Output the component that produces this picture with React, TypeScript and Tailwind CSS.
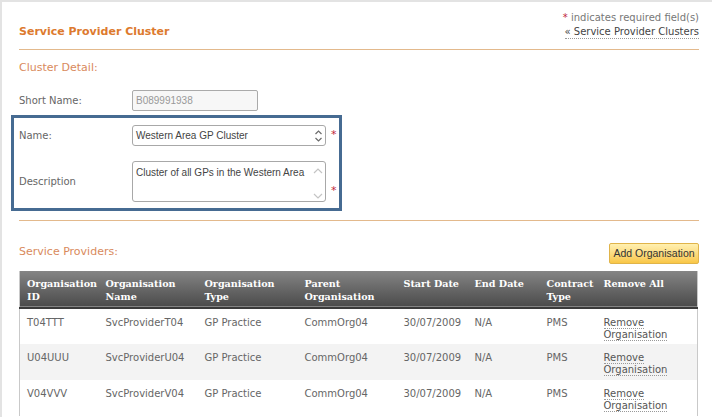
import React from "react";

const rows = [
  { id: "T04TTT", name: "SvcProviderT04" },
  { id: "U04UUU", name: "SvcProviderU04" },
  { id: "V04VVV", name: "SvcProviderV04" },
];

function Spin() {
  return (
    <svg width="9" height="14" viewBox="0 0 9 14" className="shrink-0">
      <path d="M1.5 5 L4.5 2 L7.5 5" fill="none" stroke="#6b6b6b" strokeWidth="1.2" />
      <path d="M1.5 9 L4.5 12 L7.5 9" fill="none" stroke="#6b6b6b" strokeWidth="1.2" />
    </svg>
  );
}

export default function App() {
  return (
    <div className="w-[712px] h-[417px] overflow-hidden bg-white border-t-2 border-l-2 border-[#e3e3e3] pl-[1px] font-['DejaVu_Sans',Verdana,sans-serif] text-[10px] text-[#666]">
      <div className="pl-[16px] pr-[13px]">
        {/* header */}
        <div className="flex justify-between items-start pt-[9px] border-b border-[#e3b98c] pb-[8px]">
          <div className="pt-[13px] text-[11px] font-bold text-[#dd7a2e]">Service Provider Cluster</div>
          <div className="text-right text-[10px] leading-[14px]">
            <div className="text-[#777]"><span className="text-[#c0263a]">*</span> indicates required field(s)</div>
            <div className="inline-block text-[#444] border-b border-dotted border-[#999] leading-[13px]">« Service Provider Clusters</div>
          </div>
        </div>

        <div className="pt-[10px] text-[11px] text-[#d98a5c]">Cluster Detail:</div>

        <div className="flex items-center mt-[14px] h-[21px]">
          <div className="w-[113px]">Short Name:</div>
          <div className="w-[126px] h-[21px] border border-[#aaa] rounded-[2px] bg-[#f7f7f7] px-[3px] flex items-center font-['Liberation_Sans',Arial,sans-serif] text-[10px] text-[#999]">B089991938</div>
        </div>
      </div>

      <div className="ml-[8px] w-[331px] mt-[4px] border-[3px] border-[#466b92] pl-[5px] pt-[7px] pb-[6px]">
        <div className="flex items-center h-[21px]">
          <div className="w-[113px]">Name:</div>
          <div className="w-[194px] h-[21px] border border-[#a8a8a8] rounded-[3px] bg-white pl-[3px] pr-[2px] flex items-center justify-between font-['Liberation_Sans',Arial,sans-serif] text-[10px] text-[#444]">
            <span>Western Area GP Cluster</span>
            <Spin />
          </div>
          <span className="ml-[5px] text-[#c0263a] text-[11px]">*</span>
        </div>
        <div className="flex items-center mt-[15px] h-[41px]">
          <div className="w-[113px]">Description</div>
          <div className="w-[194px] h-[41px] border border-[#a8a8a8] rounded-[3px] bg-white pl-[3px] pr-[2px] pt-[3px] flex justify-between font-['Liberation_Sans',Arial,sans-serif] text-[10px] text-[#444]">
            <span>Cluster of all GPs in the Western Area</span>
            <div className="flex flex-col justify-between h-[35px] pt-[2px]">
              <svg width="10" height="7" viewBox="0 0 10 7"><path d="M1 6 L5 2 L9 6" fill="none" stroke="#c4c4c4" strokeWidth="1.2" /></svg>
              <svg width="10" height="7" viewBox="0 0 10 7"><path d="M1 1 L5 5 L9 1" fill="none" stroke="#c4c4c4" strokeWidth="1.2" /></svg>
            </div>
          </div>
          <span className="ml-[5px] mt-[20px] text-[#c0263a] text-[11px]">*</span>
        </div>
      </div>

      <div className="pl-[16px] pr-[13px]">
        <div className="mt-[9px] border-t border-[#e3b98c]" />
        <div className="flex justify-between items-end mt-[22px]">
          <div className="text-[11px] text-[#d98a5c] pb-[4px]">Service Providers:</div>
          <button className="h-[21px] w-[90px] rounded-[2px] border border-[#e0b44a] bg-gradient-to-b from-[#fff0b0] to-[#f9c745] font-['Liberation_Sans',Arial,sans-serif] text-[10.5px] text-[#333]">Add Organisation</button>
        </div>

        <table className="mt-[7px] w-[678px] border-collapse table-fixed border-l border-r border-[#c9c9c9]">
          <colgroup>
            <col className="w-[79px]" />
            <col className="w-[99px]" />
            <col className="w-[100px]" />
            <col className="w-[99px]" />
            <col className="w-[71px]" />
            <col className="w-[72px]" />
            <col className="w-[57px]" />
            <col className="w-[101px]" />
          </colgroup>
          <thead>
            <tr className="h-[37px] bg-gradient-to-b from-[#858585] to-[#4c4c4c] border-b-2 border-[#3a3a3a] text-white font-['DejaVu_Serif',Georgia,serif] font-bold text-[9.6px] leading-[13px] text-left align-top">
              <th className="pl-[7px] pt-[6px] font-bold">Organisation ID</th>
              <th className="pl-[7px] pt-[6px] font-bold">Organisation Name</th>
              <th className="pl-[7px] pt-[6px] font-bold">Organisation Type</th>
              <th className="pl-[7px] pt-[6px] font-bold">Parent Organisation</th>
              <th className="pl-[7px] pt-[6px] font-bold">Start Date</th>
              <th className="pl-[7px] pt-[6px] font-bold">End Date</th>
              <th className="pl-[7px] pt-[6px] font-bold">Contract Type</th>
              <th className="pl-[7px] pt-[6px] font-bold">Remove All</th>
            </tr>
          </thead>
          <tbody>
            {rows.map((r, i) => (
              <tr key={r.id} className={`h-[36px] align-top leading-[12px] ${i === 1 ? "bg-[#f3f3f3]" : "bg-white"}`}>
                <td className="pl-[7px] pt-[8px]">{r.id}</td>
                <td className="pl-[7px] pt-[8px]">{r.name}</td>
                <td className="pl-[7px] pt-[8px]">GP Practice</td>
                <td className="pl-[7px] pt-[8px]">CommOrg04</td>
                <td className="pl-[7px] pt-[8px]">30/07/2009</td>
                <td className="pl-[7px] pt-[8px]">N/A</td>
                <td className="pl-[7px] pt-[8px]">PMS</td>
                <td className="pl-[7px] pt-[8px]">
                  <span className="text-[#555] border-b border-dotted border-[#999]">Remove</span>
                  <br />
                  <span className="text-[#555] border-b border-dotted border-[#999]">Organisation</span>
                </td>
              </tr>
            ))}
          </tbody>
        </table>
      </div>
    </div>
  );
}
